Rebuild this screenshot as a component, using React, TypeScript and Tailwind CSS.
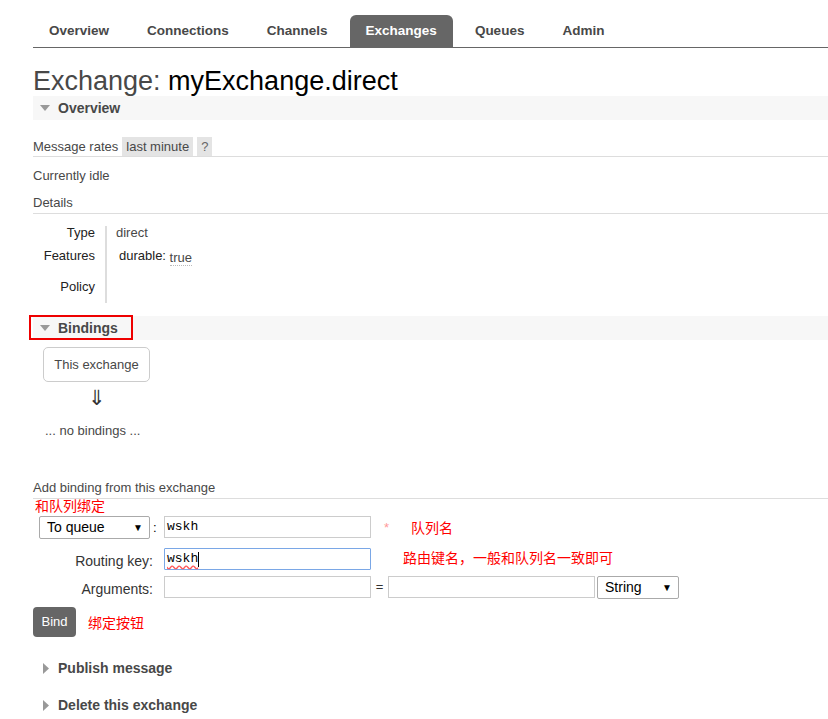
import React from 'react';

const tabs = ['Overview', 'Connections', 'Channels', 'Exchanges', 'Queues', 'Admin'];

const DownTri = () => (
  <svg width="10" height="6" viewBox="0 0 10 6" className="shrink-0">
    <path d="M0 0 L10 0 L5 6 Z" fill="#999" />
  </svg>
);

const RightTri = () => (
  <svg width="6" height="11" viewBox="0 0 6 11" className="shrink-0">
    <path d="M0 0 L6 5.5 L0 11 Z" fill="#999" />
  </svg>
);

const SectionBar = ({ title, children }: { title: string; children?: React.ReactNode }) => (
  <div className="relative h-[24px] bg-[#f7f7f7] flex items-center pl-[7px] gap-[8px]">
    <DownTri />
    <span className="font-bold text-[14px] text-[#484848]">{title}</span>
    {children}
  </div>
);

const FakeSelect = ({ label, w }: { label: string; w: string }) => (
  <div className={`${w} h-full border border-[#aaa] rounded-[2px] bg-white flex items-center justify-between pl-[7px] pr-[6px] text-[14px] text-black`}>
    <span>{label}</span>
    <span className="text-[10px]">▼</span>
  </div>
);

export default function App() {
  return (
    <div className="min-h-screen bg-white pl-[33px] text-[13px] text-[#484848] font-['Liberation_Sans',Arial,sans-serif]">
      {/* tabs */}
      <div className="h-[48px] pt-[15px] border-b border-[#666] flex gap-[6px]">
        {tabs.map((t) => (
          <div
            key={t}
            className={`h-[32px] px-[16px] flex items-center font-bold text-[13.5px] rounded-t-[6px] ${
              t === 'Exchanges' ? 'bg-[#666] text-white' : 'text-[#484848]'
            }`}
          >
            {t}
          </div>
        ))}
      </div>

      <h1 className="mt-[18px] leading-[30px] text-[27px] font-normal">
        <span className="text-[#484848]">Exchange: </span>
        <span className="text-black">myExchange.direct</span>
      </h1>

      <SectionBar title="Overview" />

      {/* message rates */}
      <div className="mt-[17px] h-[20px] border-b border-[#ddd] flex items-stretch gap-[4px]">
        <span className="leading-[19px]">Message rates</span>
        <span className="bg-[#e4e4e4] px-[4px] leading-[19px] text-[#484848]">last minute</span>
        <span className="bg-[#e4e4e4] px-[4px] leading-[19px] text-[#666]">?</span>
      </div>

      <div className="mt-[9px] leading-[20px]">Currently idle</div>
      <div className="mt-[7px] h-[21px] leading-[20px] border-b border-[#ddd]">Details</div>

      {/* details table */}
      <div className="mt-[12px] grid grid-cols-[72px_1fr] leading-[14px]">
        <div className="h-[23px] text-right pr-[10px] text-[#222]">Type</div>
        <div className="h-[23px] border-l-2 border-[#ddd] pl-[9px]">direct</div>
        <div className="h-[31px] text-right pr-[10px] text-[#222]">Features</div>
        <div className="h-[31px] border-l-2 border-[#ddd] pl-[12px] text-[#222]">
          durable:{' '}
          <span className="relative top-[2px] text-[#484848] border-b border-dotted border-[#bbb]">true</span>
        </div>
        <div className="h-[23px] text-right pr-[10px] text-[#222]">Policy</div>
        <div className="h-[23px] border-l-2 border-[#ddd]" />
      </div>

      <div className="mt-[13px]">
        <SectionBar title="Bindings">
          <div className="absolute left-[-4px] top-[-1px] w-[104px] h-[25px] border-2 border-[#e00]" />
        </SectionBar>
      </div>

      <div className="ml-[10px] mt-[7px] w-[107px]">
        <div className="h-[35px] border border-[#ccc] rounded-[5px] flex items-center justify-center">This exchange</div>
        <div className="mt-[5px] h-[22px] text-center text-[21px] leading-[22px] text-[#333] font-['DejaVu_Sans',sans-serif]">⇓</div>
      </div>

      <div className="ml-[12px] mt-[12px] leading-[20px]">... no bindings ...</div>

      {/* add binding */}
      <div className="mt-[37px] h-[21px] leading-[20px] border-b border-[#ddd]">Add binding from this exchange</div>
      <div className="ml-[2px] h-[12px] leading-[12px] text-[14px] text-[#f00] font-['Noto_Sans_CJK_SC',sans-serif]">和队列绑定</div>

      <div className="mt-[5px] flex flex-col">
        <div className="h-[23px] flex items-center">
          <div className="w-[131px] h-full flex items-center">
            <div className="ml-[6px] h-full">
              <FakeSelect label="To queue" w="w-[111px]" />
            </div>
            <span className="ml-[3px] text-black">:</span>
          </div>
          <div className="h-[22px] w-[207px] border border-[#ccc] bg-white flex items-center pl-[2px] text-[13px] text-black font-['Liberation_Mono',monospace] self-start">
            wskh
          </div>
          <span className="ml-[13px] text-[#f99]">*</span>
          <span className="ml-[22px] text-[14px] text-[#f00] font-['Noto_Sans_CJK_SC',sans-serif]">队列名</span>
        </div>

        <div className="mt-[9px] h-[22px] flex items-center">
          <div className="w-[131px] text-right pr-[11px] text-[14px] text-[#333] relative top-[2px]">Routing key:</div>
          <div className="h-[22px] w-[207px] border border-[#7aa7e6] rounded-[1px] bg-white flex items-center pl-[2px] text-[13px] text-black font-['Liberation_Mono',monospace]">
            <span className="underline decoration-wavy decoration-[#f55] underline-offset-2">wskh</span>
            <span className="w-px h-[15px] bg-black" />
          </div>
          <span className="ml-[32px] relative top-[-2px] text-[14px] text-[#f00] font-['Noto_Sans_CJK_SC',sans-serif]">
            路由键名，一般和队列名一致即可
          </span>
        </div>

        <div className="mt-[6px] h-[22px] flex items-center">
          <div className="w-[131px] text-right pr-[11px] text-[14px] text-[#333] relative top-[2px]">Arguments:</div>
          <div className="h-[22px] w-[207px] border border-[#ccc] bg-white" />
          <span className="w-[17px] text-center text-[#333]">=</span>
          <div className="h-[22px] w-[207px] border border-[#ccc] bg-white" />
          <div className="ml-[2px] h-[23px]">
            <FakeSelect label="String" w="w-[82px]" />
          </div>
        </div>

        <div className="mt-[9px] flex items-center">
          <div className="h-[30px] w-[43px] bg-[#666] rounded-[4px] text-white flex items-center justify-center text-[13px]">Bind</div>
          <span className="ml-[12px] text-[14px] text-[#f00] font-['Noto_Sans_CJK_SC',sans-serif]">绑定按钮</span>
        </div>
      </div>

      <div className="mt-[21px] h-[20px] flex items-center pl-[10px] gap-[9px]">
        <RightTri />
        <span className="font-bold text-[14px] text-[#484848]">Publish message</span>
      </div>
      <div className="mt-[17px] h-[20px] flex items-center pl-[10px] gap-[9px]">
        <RightTri />
        <span className="font-bold text-[14px] text-[#484848]">Delete this exchange</span>
      </div>
    </div>
  );
}
